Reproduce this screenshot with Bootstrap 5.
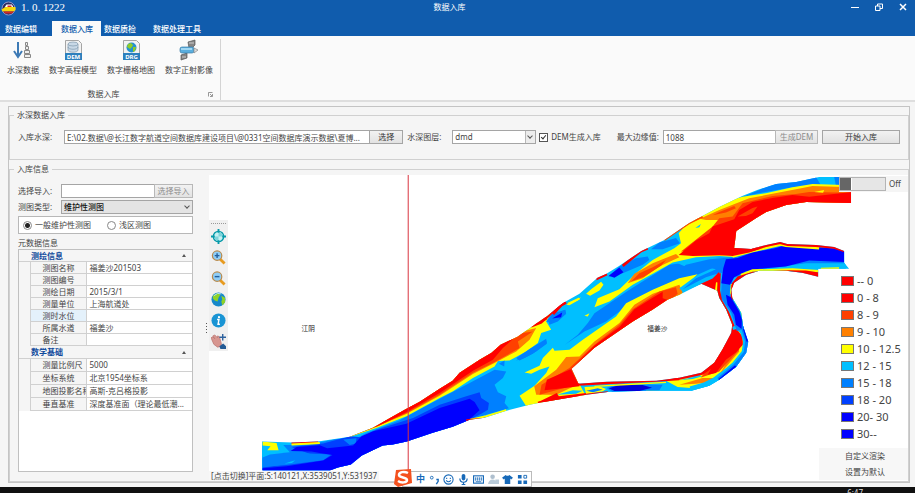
<!DOCTYPE html>
<html lang="zh-CN">
<head>
<meta charset="utf-8">
<meta name="viewport" content="width=device-width, initial-scale=1">
<title>数据入库</title>
<link rel="stylesheet" href="https://cdn.jsdelivr.net/npm/bootstrap@5.3.0/dist/css/bootstrap.min.css">
<style>
  body { font: 8px/12px "Noto Sans", "Noto Sans CJK SC", sans-serif; color: #444; background: #f5f5f5; }
  button, input, select { font: inherit; color: inherit; border-radius: 0; }
  .app-header { background: #105cad; color: #fff; }
  .title-row { height: 21px; }
  .title-text { line-height: 14px; }
  .version { font: 11px/14px "Liberation Serif", serif; }
  .win-btn { width: 24px; height: 12px; }
  .bare { background: none; border: 0; padding: 0; color: inherit; }
  .ribbon-tabs .nav-link { color: #fff; padding: 2px 0 1px; font-size: 8px; line-height: 12px; border-radius: 0; font-weight: 500; }
  .ribbon-tabs .nav-link.active { background: #fafafa; color: #105cad; padding-left: 9px; padding-right: 8px; }
  .tab-first { margin: 0 15px 0 5px; }
  .tab-third { margin: 0 17px 0 3px; }
  .ribbon { background: #fafafa; border-bottom: 2px solid #dedede; }
  .ribbon-group { margin: 3px 0 0; padding: 0 7px; border-right: 1px solid #d4d4d4; }
  .ribbon-items { gap: 10px; }
  .ribbon-items svg { width: 22px; height: 22px; display: block; margin: 0 auto 3px; }
  .ribbon-items button { padding: 0; }
  .ribbon-caption { padding-top: 12px; }
  .workspace { margin: 4px 5px 4px 8px; border: 1px solid #c4c4c4; padding-top: 2px; }
  .group-box { border: 1px solid #d0d0d0; }
  .group-box > legend { font-size: 8px; line-height: 12px; margin: 0 0 0 4px; padding: 0 3px; }
  .box-in { height: 14px; border: 1px solid #a5a5a5; background: #fff; padding: 0 2px; min-width: 0; line-height: 12px; text-overflow: ellipsis; }
  .box-btn { height: 14px; border: 1px solid #a5a5a5; background: linear-gradient(#f2f2f2, #e2e2e2); padding: 0; line-height: 12px; color: #333; white-space: nowrap; }
  .box-btn:disabled { color: #8c8c8c; border-color: #b8b8b8; }
  .box-in + .box-btn { margin-left: -1px; }
  .box-sel { appearance: none; height: 14px; border: 1px solid #a5a5a5; padding: 0 12px 0 2px; line-height: 12px; border-radius: 0; }
  .sel-wrap::after { content: ""; position: absolute; right: 4px; top: 4px; width: 4px; height: 4px; border: solid #555; border-width: 0 1px 1px 0; transform: rotate(45deg); pointer-events: none; }
  .sel-split::before { content: ""; position: absolute; right: 1px; top: 1px; bottom: 1px; width: 10px; background: #ededed; border-left: 1px solid #b8b8b8; pointer-events: none; }
  .form-row { padding: 9px 8px 15px 8px; }
  .form-row label { white-space: nowrap; flex-shrink: 0; }
  .lbl-wide { width: 46px; }
  .lbl-layer { width: 49px; }
  .path-set { flex: 3 1 341px; min-width: 0; }
  .w-pick { width: 34px; flex-shrink: 0; }
  .layer-sel { width: 84px; }
  .edge-set { flex: 1 1 156px; min-width: 0; }
  .w-dem { width: 43px; flex-shrink: 0; }
  .w-imp { width: 39px; }
  .w-start { width: 78px; flex-shrink: 0; }
  .tick { appearance: none; width: 9px; height: 9px; margin: 0 3px 0 3px; border: 1px solid #555; background: #fff; position: relative; }
  .tick:checked::after { content: ""; position: absolute; left: 2px; top: 0; width: 3px; height: 5px; border: solid #333; border-width: 0 1px 1px 0; transform: rotate(40deg); }
  .side { width: 175px; margin: 9px 12px 9px 8px; }
  .side .lbl-wide { width: 43px; }
  .gap-group { margin-top: 3px; }
  .gap-row { margin-top: 2px; }
  .type-sel { background: #e4e4e4; color: #111; font-weight: 500; }
  .radio-box { height: 18px; border: 1px solid #b8b8b8; background: #fff; padding-left: 4px; margin-top: 2px; }
  .dot { appearance: none; width: 9px; height: 9px; border: 1px solid #888; border-radius: 50%; background: #fff; margin: 0 3px 0 0; }
  .dot:checked { background: radial-gradient(circle, #222 0 2px, #fff 3px); }
  .meta-title { margin: 3px 0 0; }
  .prop-grid { border: 1px solid #c0c0c0; background: #fff; }
  .prop-grid table { table-layout: fixed; border-collapse: collapse; line-height: 11px; }
  .prop-grid td, .prop-grid th { padding: 0; border: 0 solid #d0d0d0; border-width: 0 0 1px 1px; white-space: nowrap; overflow: hidden; font-weight: 400; }
  .prop-grid .g-head { background: #f5f5f5; color: #104a9c; font-weight: 700; padding: 0 6px 0 12px; border-left: 0; }
  .prop-grid .g-name { background: #f5f5f5; padding-left: 12px; }
  .prop-grid .g-val { padding: 0 3px; text-overflow: ellipsis; }
  .prop-grid .g-pad { background: #f5f5f5; border: 0; }
  .prop-grid .is-picked { background: #e4f1fb; }
  .prop-grid .tall { line-height: 12px; }
  .arrow { border: solid transparent; border-width: 0 2px 3px; border-bottom-color: #555; width: 0; height: 0; }
  .splitter { width: 3px; height: 12px; background: radial-gradient(circle, #555 0 1px, transparent 1px) 0 0/3px 3px; margin-right: 1px; }
  .map-pane { background: #fff; min-height: 306px; }
  .map-pane > svg { width: 100%; height: 100%; }
  .map-tools { left: 0; top: 45px; width: 19px; background: #f0f0f0; padding: 3px 2px 2px; gap: 6px; }
  .map-tools::before { content: ""; border-top: 1px dotted #999; margin-bottom: -1px; }
  .map-tools svg { width: 15px; height: 15px; display: block; }
  .map-status { left: 0; bottom: 0; background: #f7f7f7; padding: 0 2px; line-height: 10px; }
  .side-switch { right: 0; top: 1px; background: #f5f5f5; width: 69px; height: 16px; }
  .toggle { appearance: none; width: 47px; height: 14px; margin: 0 3px 0 0; border: 1px solid #b4b4b4; background: linear-gradient(90deg, #666 11px, #fff 11px 12px, #e6e6e6 12px); }
  .depth-key { right: 0; top: 97px; width: 67px; font: 11px/17px "Noto Sans", sans-serif; }
  .swatch { width: 13px; height: 10px; border: 1px solid #777; margin-right: 3px; }
  .render-menu { right: 0; bottom: 1px; width: 89px; background: #f7f7f7; padding: 0 0 0 26px; }
  .render-menu button { line-height: 16px; text-align: left; }
  .taskbar { height: 6px; background: #101010; color: #ddd; padding-right: 52px; line-height: 12px; }
  .ime { left: 402px; bottom: 6px; height: 16px; width: 130px; background: #fff; border: 1px solid #bbb; padding: 0 3px 0 13px; color: #1769b8; font: 700 9px/14px "Noto Sans CJK SC", sans-serif; }
  .ime svg { width: 11px; height: 11px; }
  .ime .ime-logo { position: absolute; left: -10px; bottom: -2px; width: 20px; height: 20px; }
</style>
<script src="https://cdn.jsdelivr.net/npm/bootstrap@5.3.0/dist/js/bootstrap.bundle.min.js"></script>
</head>
<body class="d-flex flex-column min-vh-100 position-relative">

<header class="app-header">
  <div class="title-row d-flex align-items-start position-relative">
    <svg width="17" height="17" viewBox="0 0 34 34" aria-hidden="true"><circle cx="17" cy="17" r="13" fill="#2b2a5e" stroke="#8d94c9" stroke-width="2"/><path d="M13 9h11l3 6H9z" fill="#fff"/><path d="M3 19l8-5h20v6l-4 3H5z" fill="#f8d90c"/><path d="M7 23h21l-4 4H10z" fill="#d32a24"/><path d="M15 11h8v3h-8z" fill="#d32a24"/></svg>
    <span class="version ms-1">1. 0. 1222</span>
    <span class="title-text position-absolute start-50 translate-middle-x pe-3">数据入库</span>
    <div class="ms-auto d-flex">
      <button class="bare win-btn" aria-label="最小化"><svg width="8" height="8" viewBox="0 0 8 8"><path d="M0 4.500h8" stroke="#fff"/></svg></button>
      <button class="bare win-btn" aria-label="还原"><svg width="8" height="8" viewBox="0 0 8 8"><path d="M.5 3h4.500v4.500h-4.500zM2.500 3V1h5v4.500H5" fill="none" stroke="#fff"/></svg></button>
      <button class="bare win-btn" aria-label="关闭"><svg width="8" height="8" viewBox="0 0 8 8"><path d="M1 1l6 6M7 1L1 7" stroke="#fff" stroke-width="1.500"/></svg></button>
    </div>
  </div>
  <nav class="ribbon-tabs nav">
    <a class="nav-link tab-first" href="#">数据编辑</a>
    <a class="nav-link active" href="#" aria-current="page">数据入库</a>
    <a class="nav-link tab-third" href="#">数据质检</a>
    <a class="nav-link" href="#">数据处理工具</a>
  </nav>
</header>

<section class="ribbon d-flex">
  <div class="ribbon-group">
    <div class="ribbon-items d-flex">
      <button class="bare"><svg viewBox="0 0 22 22"><path d="M6 3v14M2 12l4 6 4-6" fill="none" stroke="#3d7ab5" stroke-width="2"/><g fill="#eee" stroke="#888"><path d="M13.500 3.500h2v3h-2zM13.500 7.500h3v3h-3zM12.500 11.500h5v3h-5zM12.500 15.500h6v3h-6z"/></g></svg>水深数据</button>
      <button class="bare"><svg viewBox="0 0 22 22"><path d="M3.500 1.500h13l3 3v16h-16z" fill="#f2f2f2" stroke="#a5a5a5"/><g fill="#c8d8e6" stroke="#8098ac" stroke-width=".7"><path d="M6 5v6c0 3 10 3 10 0V5"/><ellipse cx="11" cy="5" rx="5" ry="2"/><path d="M6 8c0 3 10 3 10 0" fill="none"/></g><path d="M3 14h17v7H3z" fill="#2d80bd"/><text x="11.500" y="20" font-size="6" font-weight="700" fill="#fff" text-anchor="middle">DEM</text></svg>数字高程模型</button>
      <button class="bare"><svg viewBox="0 0 22 22"><path d="M3.500 1.500h13l3 3v16h-16z" fill="#f2f2f2" stroke="#a5a5a5"/><circle cx="11.500" cy="8.500" r="5" fill="#2591d0"/><path d="M8 5l3-1 2 2-1 2-2 2-3-2zM13 8l3 0-1 4-2 1z" fill="#8dcc29"/><path d="M3 14h17v7H3z" fill="#2d80bd"/><text x="11.500" y="20" font-size="6" font-weight="700" fill="#fff" text-anchor="middle">DRG</text></svg>数字栅格地图</button>
      <button class="bare"><svg viewBox="0 0 22 22"><path d="M10 3l7-2v5l-3 3h-3zM3 16l6-2v5l-6 2z" fill="#858585" stroke="#555" stroke-width=".7"/><path d="M11 4h5M4 18h4" stroke="#ccc"/><rect x="2" y="8" width="14" height="6" rx="2" fill="#5aaede" stroke="#3b7ca8" stroke-width=".7"/><path d="M3 10h11" stroke="#b9e4fa" stroke-width="1.500"/><path d="M16 9l4 2-4 3z" fill="#ddd" stroke="#888" stroke-width=".7"/></svg>数字正射影像</button>
    </div>
    <div class="ribbon-caption d-flex align-items-center">
      <span class="flex-fill text-center pe-2">数据入库</span>
      <button class="bare d-flex" aria-label="更多选项"><svg width="5" height="5" viewBox="0 0 10 10"><path d="M1 9V1h8M4 4l4 4M9 4v5H4" fill="none" stroke="#777" stroke-width="1.500"/></svg></button>
    </div>
  </div>
</section>

<main class="workspace flex-fill d-flex flex-column">
  <fieldset class="group-box">
    <legend class="float-none w-auto">水深数据入库</legend>
    <div class="form-row d-flex align-items-center">
      <label class="lbl-wide" for="path">入库水深:</label>
      <div class="path-set d-flex">
        <input id="path" class="box-in flex-fill" value="E:\02.数据\@长江数字航道空间数据库建设项目\@0331空间数据库演示数据\夏博...">
        <button class="box-btn w-pick">选择</button>
      </div>
      <label class="lbl-layer ps-1" for="layer">水深图层:</label>
      <div class="sel-wrap sel-split position-relative"><select id="layer" class="box-sel layer-sel bg-white"><option>dmd</option></select></div>
      <input id="dem" class="tick" type="checkbox" checked><label class="me-3" for="dem">DEM生成入库</label>
      <label class="lbl-wide" for="edge">最大边缘值:</label>
      <div class="edge-set d-flex">
        <input id="edge" class="box-in flex-fill" value="1088">
        <button class="box-btn w-dem" disabled>生成DEM</button>
      </div>
      <button class="box-btn w-start ms-1">开始入库</button>
    </div>
  </fieldset>

  <fieldset class="group-box flex-fill d-flex flex-column gap-group">
    <legend class="float-none w-auto">入库信息</legend>
    <div class="d-flex flex-fill">
      <aside class="side d-flex flex-column">
        <div class="d-flex align-items-center">
          <label class="lbl-wide flex-shrink-0" for="imp">选择导入:</label>
          <input id="imp" class="box-in flex-fill"><button class="box-btn flex-shrink-0 w-imp" disabled>选择导入</button>
        </div>
        <div class="d-flex align-items-center gap-row">
          <label class="lbl-wide flex-shrink-0" for="kind">测图类型:</label>
          <div class="sel-wrap position-relative flex-fill"><select id="kind" class="box-sel type-sel w-100"><option>维护性测图</option></select></div>
        </div>
        <div class="radio-box d-flex align-items-center">
          <input id="r1" class="dot" type="radio" name="survey" checked><label for="r1" class="me-3">一般维护性测图</label>
          <input id="r2" class="dot" type="radio" name="survey"><label for="r2">浅区测图</label>
        </div>
        <p class="meta-title">元数据信息</p>
        <div class="prop-grid flex-fill">
          <table class="w-100">
            <colgroup><col width="11"><col width="56"><col></colgroup>
            <tbody>
              <tr><th class="g-head" colspan="3"><div class="d-flex align-items-center justify-content-between">测绘信息<span class="arrow"></span></div></th></tr>
              <tr><td class="g-pad"></td><th class="g-name">测图名称</th><td class="g-val">福姜沙201503</td></tr>
              <tr><td class="g-pad"></td><th class="g-name">测图编号</th><td class="g-val"></td></tr>
              <tr><td class="g-pad"></td><th class="g-name">测绘日期</th><td class="g-val">2015/3/1</td></tr>
              <tr><td class="g-pad"></td><th class="g-name">测量单位</th><td class="g-val">上海航道处</td></tr>
              <tr><td class="g-pad"></td><th class="g-name is-picked">测时水位</th><td class="g-val"></td></tr>
              <tr><td class="g-pad"></td><th class="g-name">所属水道</th><td class="g-val">福姜沙</td></tr>
              <tr><td class="g-pad"></td><th class="g-name">备注</th><td class="g-val"></td></tr>
            </tbody>
            <tbody class="tall">
              <tr><th class="g-head" colspan="3"><div class="d-flex align-items-center justify-content-between">数学基础<span class="arrow"></span></div></th></tr>
              <tr><td class="g-pad"></td><th class="g-name">测量比例尺</th><td class="g-val">5000</td></tr>
              <tr><td class="g-pad"></td><th class="g-name">坐标系统</th><td class="g-val">北京1954坐标系</td></tr>
              <tr><td class="g-pad"></td><th class="g-name">地图投影名称</th><td class="g-val">高斯-克吕格投影</td></tr>
              <tr><td class="g-pad"></td><th class="g-name">垂直基准</th><td class="g-val">深度基准面（理论最低潮...</td></tr>
            </tbody>
          </table>
        </div>
      </aside>
      <div class="splitter align-self-center"></div>

      <div class="map-pane flex-fill position-relative d-flex">
        <svg viewBox="627 525 2100 906" preserveAspectRatio="xMinYMin meet" role="img" aria-label="水深分布图">
          <defs>
            <clipPath id="river"><path transform="scale(3)" clip-rule="evenodd" d="M262 442 293 443 318 442 350 437 373 428 405 410 420 402 440 389 453 381 460 373 480 360 492 353 501 345 518 337 535 325 548 316 560 306 564 303 580 294 598 278 607 274 620 266 642 251 665 240 690 223 720 207 743 196 758 190 777 184 797 182 820 177H852V203L807 202 787 205 767 212 757 218 737 231 735 248 752 249 767 245 781 242 788 244 817 245 835 247 845 251V263L850 269H819V277L803 273 787 271 760 271 747 275 735 283 732 290 733 298 742 313 744 327 749 342 747 353 737 367 720 380 710 386 692 391H647L610 392 587 395 540 403 530 405 507 411 485 418 470 420 453 427 433 433 407 442 393 445 383 446 362 456 351 465 338 468 330 471H262ZM572 369 579 384 607 382 657 381 680 378 702 373 715 363 723 350 732 333 733 325 727 310 720 298 718 291 702 284 680 295 668 300 653 310 633 322 595 348Z"/></clipPath>
          </defs>
          <g clip-path="url(#river)">
            <path d="M780 525h1800v900H780z" fill="#00bfff"/>
            <!-- western reach -->
            <g transform="translate(720 510)">
              <path fill="#0080ff" d="M68 866 90 850 125 850 150 848 130 826 200 826 290 808 350 806 380 790 480 752 560 708 690 640 765 600 800 605 790 625 765 645 775 668 800 680 795 700 808 716 740 735 690 752 400 920H68Z"/>
              <path fill="#0040ff" d="M155 832 250 822 330 800 365 803 410 780 520 745 600 705 680 680 720 668 725 685 748 700 745 720 725 732 690 750 400 920H68V894L250 868Z"/>
              <path fill="#0080ff" d="M68 860 180 850 275 855 250 872 140 886 68 892ZM310 810 350 806 348 822 330 826Z"/>
              <path fill="#0000ff" d="M152 844 170 832 240 827 262 836 340 828 365 800 400 785 500 762 600 715 690 687 705 697 720 722 690 749 400 930H68V896L140 890 250 873 278 856 240 850 215 846Z"/>
              <path fill="#00bfff" d="M68 845 80 838 118 842 130 850 90 855 68 864ZM134 882 166 872 156 880Z"/>
              <path fill="#ff0" d="M68 816 110 820 116 842 82 842 92 830 68 828Z"/>
              <path fill="#ff0" d="M330 802 410 775 500 740 600 685 640 665 700 625 765 590 775 574 810 572 860 545 895 520 905 490 935 480 920 455 950 400 900 430 780 500 560 640 400 760Z"/>
              <path fill="#ff8000" d="M405 773 500 733 600 678 700 613 765 580 830 545 870 510 890 475 830 490 600 640Z"/>
              <path fill="#ff4000" d="M410 771 500 731 600 675 700 609 760 580 840 535 835 515 880 485 780 500Z"/>
              <path fill="#f00" d="M325 803 410 771 500 728 600 670 700 603 760 570 790 535 820 508 740 520 560 620 400 740Z"/>
              <path fill="none" stroke="#f00" stroke-width="7" d="M155 820 235 816 M875 470 905 458 960 408 980 398"/>
              <path fill="none" stroke="#ff0" stroke-width="6" d="M155 825 240 820 M690 751 740 740 800 722 M985 402 1020 386"/>
              <path fill="none" stroke="#f00" stroke-width="6" d="M680 752 738 747"/>
              <path fill="#0080ff" d="M830 572 880 535 920 512 922 522 890 545 855 565ZM778 582 795 572 794 590ZM925 450 975 420 980 432 955 455 930 465Z"/>
              <path fill="#00f" d="M945 442 968 430 960 446Z"/>
            </g>
            <!-- main channel, island shore and southern arm -->
            <g transform="translate(1560 810)">
              <path fill="#0080ff" d="M135 226 175 195 205 160 225 130 330 60 450 -15 560 -30 600 -38 670 -40 610 0 560 15 500 25 420 65 340 95 260 155 195 185Z"/>
              <path fill="#ff0" d="M20 410 0 378 45 348 80 310 90 290 60 300 35 312 15 308 60 288 70 265 100 234 105 243 150 240 190 210 290 140 320 100 400 60 480 25 535 13 510 38 485 55 490 80 155 298 200 380Z"/>
              <path fill="#ff8000" d="M50 375 44 350 110 300 140 262 180 260 225 215 300 160 345 105 400 72 480 45 490 68 178 343 110 375Z"/>
              <path fill="#ff4000" d="M60 375 66 345 150 295 225 225 300 165 340 118 420 65 470 52 475 72 178 343Z"/>
              <path fill="#f00" d="M75 362 82 330 155 298 225 227 300 172 345 118 400 84 430 66 430 85 450 92 340 160 155 300 180 350 110 358ZM55 398 112 370 118 380 200 370 200 395Z"/>
              <path fill="#00bfff" d="M112 375 160 362 190 363 170 372ZM205 350H470L520 345 560 350 600 320 680 245 700 300 600 370H200Z"/>
              <path fill="#ff0" d="M195 352 240 350 260 358 250 365 200 374ZM440 333 475 352 515 355 560 342 600 310 655 275 672 240 674 200 650 178 620 250 540 320Z"/>
              <path fill="#0080ff" d="M200 363 235 356 250 360 220 368ZM262 355 290 344 430 345 420 362 280 368Z"/>
              <path fill="#0000d8" d="M268 356 300 346 370 346 398 354 360 364 285 364Z"/>
              <path fill="#ff8000" d="M480 345 550 325 590 325 570 338 530 342ZM600 315 660 245 655 225Z"/>
              <path fill="#00bfff" d="M480 332 530 320 555 318 520 328Z"/>
              <path fill="#ff4000" d="M545 323 600 305 660 240 650 180Z"/>
              <path fill="#f00" d="M440 332 545 305 585 275 610 235 640 160 655 182 670 200 671 225 650 248 620 270 590 310 565 315 575 298 550 315 480 330Z"/>
              <path fill="none" stroke="#f00" stroke-width="9" d="M175 344 410 332 480 327"/>
              <path fill="none" stroke="#ff0" stroke-width="4" d="M225 350 350 343 440 338M380 365 430 366"/>
              <path fill="none" stroke="#f00" stroke-width="5" d="M200 375 265 367M55 399 180 377"/>
              <path fill="none" stroke="#00bfff" stroke-width="30" d="M672 165 687 215 682 250 650 290 600 332 560 352 515 365"/>
              <path fill="none" stroke="#0080ff" stroke-width="18" d="M672 165 687 215 682 250 650 290 600 332"/>
              <path fill="none" stroke="#00f" stroke-width="8" d="M672 165 686 215M650 290 600 332"/>
              <path fill="#0080ff" d="M-10 265 30 238 80 207 82 220 40 252 0 272ZM80 155 100 130 138 120 140 132 100 160Z"/>
              <path fill="#00f" d="M98 146 128 128 125 142Z"/>
              <path fill="#ff0" d="M200 72 215 58 245 36 252 45 240 62 212 78ZM140 105 185 82 175 92 150 106ZM195 138 210 130 205 140Z"/>
              <path fill="none" stroke="#f00" stroke-width="10" d="M45 163 80 145 M100 132 125 105 137 98 M230 27 262 12"/>
            </g>
            <!-- northern branch and eastern outlet -->
            <g transform="translate(1560 510)">
              <path fill="#0080ff" d="M650 90 720 60 770 38 830 34 890 20 905 45 820 52 740 66 690 76ZM945 20H1000V45H950ZM395 238 420 218 470 204 482 220 430 238ZM265 322 300 290 350 265 385 260 390 270 370 285 310 310Z"/>
              <path fill="#00f" d="M268 318 300 293 312 307 285 324Z"/>
              <path fill="#ff0" d="M225 412 235 385 300 358 350 310 400 270 465 235 485 220 478 190 500 165 600 100 670 80 740 70 820 52 880 42 1000 46V100H860L640 240 660 262 600 258 530 262 460 278 400 312 340 345 270 395Z"/>
              <path fill="#ff8000" d="M325 340 345 312 400 280 470 252 480 262 420 290 370 325ZM430 212 500 165 600 120 690 85 850 54 880 48 1000 52V100L600 200 580 190 600 150 560 150 535 145 500 170Z"/>
              <path fill="#ff4000" d="M335 335 360 310 400 292 440 270 425 288 375 320ZM485 245 580 170 600 145 640 140 670 100 760 78 830 72 870 66 1000 68V100L600 240Z"/>
              <path fill="#f00" d="M478 255 530 212 570 190 580 170 645 148 660 120 700 96 760 84 820 75 870 80 1000 66V120L700 238 640 255 520 258Z"/>
              <path fill="#ff4000" d="M655 140 700 114 715 110 700 130 680 138ZM580 136 600 126 645 108 650 115 620 128Z"/>
              <path fill="#ff0" d="M885 66 915 60 912 68ZM490 220 500 190 535 150 575 150 565 178 520 205Z"/>
              <path fill="#00bfff" d="M528 174 545 162 540 172Z"/>
              <path fill="none" stroke="#ff4000" stroke-width="6" d="M435 210 505 162 550 140"/>
              <path fill="none" stroke="#f00" stroke-width="8" d="M310 288 365 243 385 235"/>
              <path fill="#00bfff" d="M470 278 560 263 640 262 700 248 790 220 900 235 980 245V310H700L640 330 600 335 545 345 490 365 480 355 535 315 590 290 560 285 520 300Z"/>
              <path fill="#0080ff" d="M450 325 500 285 570 268 640 262 780 225 980 245V280H860L700 302 640 325 630 450H600L598 310 560 322 490 358 530 325 590 298 560 292 520 315Z"/>
              <path fill="#f00" d="M540 344 580 326 600 306 602 365 570 355Z"/>
              <!-- connecting channel -->
              <path fill="none" stroke="#ff0" stroke-width="50" d="M615 340 610 380 640 425 655 465"/>
              <path fill="none" stroke="#00bfff" stroke-width="38" d="M618 310 613 375 645 425 660 475"/>
              <path fill="none" stroke="#0080ff" stroke-width="26" d="M622 310 618 380 648 425 665 480"/>
              <path fill="none" stroke="#f00" stroke-width="9" d="M600 310 598 362 604 392 625 428 642 470"/>
              <path fill="none" stroke="#f00" stroke-width="7" d="M640 345 637 390"/>
              <path fill="#00f" d="M606 340 612 295 620 268 655 264 700 248 770 234 800 226 890 232 950 236 975 244V276L870 272 800 290 720 297 680 304 645 322 632 345ZM620 375 635 382 660 425 668 450 667 478 650 465 645 435 625 405Z"/>
              <path fill="none" stroke="#ff0" stroke-width="7" d="M640 260 700 244 785 224 800 228 900 235M665 316 700 302 820 299 900 304M905 297 960 296"/>
              <path fill="none" stroke="#f00" stroke-width="9" d="M645 240H695L740 227 783 218 805 224 890 227 945 232 975 242"/>
              <path fill="#f00" d="M645 236 700 238 730 235 690 248 640 258 600 255ZM638 340 655 320 700 306 810 301 860 302 900 308V324H800L700 310 638 355Z"/>
            </g>
          </g>
          <path d="M1225.500 525V1431" stroke="#d9333f" stroke-width="3"/>
          <g font-size="20" fill="#222"><text x="905" y="993">江阴</text><text x="1944" y="993">福姜沙</text></g>
        </svg>

        <div class="map-tools position-absolute d-flex flex-column" role="toolbar">
          <button class="bare" aria-label="全图"><svg viewBox="0 0 16 16"><circle cx="8" cy="8" r="5.500" fill="#c5f0f3" stroke="#079aa9" stroke-width="1.500"/><path d="M8 3v5h5a5 5 0 0 0-5-5zM8 8v5a5 5 0 0 1-5-5z" fill="#7fd3da"/><path d="M8 0v4M8 12v4M0 8h4M12 8h4" stroke="#079aa9" stroke-width="2"/></svg></button>
          <button class="bare" aria-label="放大"><svg viewBox="0 0 16 16"><path d="M9 9l5.500 5.500" stroke="#e79b20" stroke-width="3"/><circle cx="6.500" cy="6" r="5" fill="#8fcdf6" stroke="#b98a4c" stroke-width="1.300"/><path d="M4 6h5M6.500 3.500v5" stroke="#225f9d" stroke-width="1.500"/></svg></button>
          <button class="bare" aria-label="缩小"><svg viewBox="0 0 16 16"><path d="M9 9l5.500 5.500" stroke="#e79b20" stroke-width="3"/><circle cx="6.500" cy="6" r="5" fill="#8fcdf6" stroke="#b98a4c" stroke-width="1.300"/><path d="M4 6h5" stroke="#225f9d" stroke-width="1.500"/></svg></button>
          <button class="bare" aria-label="地球"><svg viewBox="0 0 16 16"><circle cx="8" cy="8" r="7.500" fill="#1688ca"/><path d="M2 4l5-3 3 2-2 3-1 4-3-1-2-2zM11 4l4 2v5l-3 3-1-4 1-2z" fill="#8ed226"/><path d="M3 4q4-4 8-2" stroke="#b9e5f5" fill="none"/></svg></button>
          <button class="bare" aria-label="信息"><svg viewBox="0 0 16 16"><circle cx="8" cy="8" r="7.500" fill="#1994d4"/><circle cx="8.500" cy="4.500" r="1.200" fill="#fff"/><path d="M6.500 7h2l-1 5h2" fill="none" stroke="#fff" stroke-width="1.500"/></svg></button>
          <button class="bare" aria-label="平移"><svg viewBox="0 0 16 16"><path d="M0 4l2-1 2 2-2-3 2-1 3 3 0-2 2 1 2 7 0 3-4 1-4-3z" fill="#d79690" stroke="#b66d68" stroke-width=".7"/><path d="M12.500 0v7M9 3.500h7" stroke="#2e629e" stroke-width="1.500"/><path d="M9 13l4-3 3 3v3h-6z" fill="#235b95"/></svg></button>
        </div>

        <div class="side-switch position-absolute d-flex align-items-center"><input id="sw" class="toggle" type="checkbox" role="switch"><label for="sw">Off</label></div>

        <ul class="depth-key list-unstyled position-absolute mb-0">
          <li class="d-flex align-items-center"><span class="swatch" style="background:#f00"></span>-- 0</li>
          <li class="d-flex align-items-center"><span class="swatch" style="background:#f00"></span>0 - 8</li>
          <li class="d-flex align-items-center"><span class="swatch" style="background:#ff4000"></span>8 - 9</li>
          <li class="d-flex align-items-center"><span class="swatch" style="background:#ff8000"></span>9 - 10</li>
          <li class="d-flex align-items-center"><span class="swatch" style="background:#ff0"></span>10 - 12.5</li>
          <li class="d-flex align-items-center"><span class="swatch" style="background:#00bfff"></span>12 - 15</li>
          <li class="d-flex align-items-center"><span class="swatch" style="background:#0080ff"></span>15 - 18</li>
          <li class="d-flex align-items-center"><span class="swatch" style="background:#0040ff"></span>18 - 20</li>
          <li class="d-flex align-items-center"><span class="swatch" style="background:#00f"></span>20- 30</li>
          <li class="d-flex align-items-center"><span class="swatch" style="background:#00f"></span>30--</li>
        </ul>

        <div class="render-menu position-absolute d-flex flex-column">
          <button class="bare">自定义渲染</button>
          <button class="bare">设置为默认</button>
        </div>
        <div class="map-status position-absolute">[点击切换]平面:S:140121,X:3539051,Y:531937</div>
      </div>
    </div>
  </fieldset>
</main>

<footer class="taskbar overflow-hidden text-end">6:47</footer>

<div class="ime position-absolute d-flex align-items-center justify-content-between">
  <svg class="ime-logo" viewBox="0 0 20 20"><path d="M3 2l15-1 1 14-14 4-4-3z" fill="#f4511e"/><path d="M15 5c-4-2-9-1-9 2s8 2 8 5-6 3-9 1" fill="none" stroke="#fff" stroke-width="2.500"/></svg>
  <span>中</span>
  <svg viewBox="0 0 12 12"><circle cx="3" cy="4" r="1.500" fill="none" stroke="#1769b8"/><path d="M8 6h2v2l-2 3" fill="none" stroke="#1769b8" stroke-width="1.500"/></svg>
  <svg viewBox="0 0 12 12"><circle cx="6" cy="6" r="5" fill="none" stroke="#1769b8" stroke-width="1.200"/><path d="M4 4v1.500M8 4v1.500M3.500 7q2.500 3 5 0" fill="none" stroke="#1769b8" stroke-width="1.200"/></svg>
  <svg viewBox="0 0 12 12"><rect x="4" y="0" width="4" height="7" rx="2" fill="#1769b8"/><path d="M2 5q0 4 4 4t4-4M6 9v3M4 11.500h4" fill="none" stroke="#1769b8" stroke-width="1.300"/></svg>
  <svg viewBox="0 0 12 12"><rect x=".6" y="2" width="10.800" height="8" fill="none" stroke="#1769b8" stroke-width="1.200"/><path d="M2 4.500h8M2 6.500h8" stroke="#1769b8" stroke-dasharray="1.500 .7" stroke-width="1.300"/><path d="M3 8.500h6" stroke="#1769b8"/></svg>
  <svg viewBox="0 0 12 12"><circle cx="5" cy="3" r="2.500" fill="#aebfce"/><path d="M0 11q1-5 5-5t4 5zM8 6h4v5H8z" fill="#b9cbd9"/></svg>
  <svg viewBox="0 0 12 12"><path d="M4 1q2 2 4 0l4 3-2 2-1-1v6H3V5L2 6 0 4z" fill="#1769b8"/></svg>
  <svg viewBox="0 0 12 12"><path d="M1 1h4v4H1zM1 7h4v4H1zM7 7h4v4H7z" fill="#1769b8"/><path d="M7.500 1.500h3v3h-3z" fill="none" stroke="#1769b8"/></svg>
</div>
</body>
</html>
